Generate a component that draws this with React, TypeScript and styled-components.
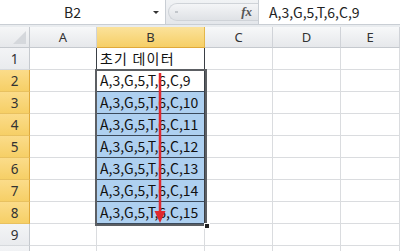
import React from "react"
import styled, { createGlobalStyle } from "styled-components"

const GlobalStyle = createGlobalStyle`
  html, body {
    margin: 0;
    padding: 0;
    width: 400px;
    height: 251px;
    overflow: hidden;
    background: #ffffff;
  }
  * {
    box-sizing: border-box;
  }
`

const Window = styled.div`
  width: 400px;
  height: 251px;
  display: flex;
  flex-direction: column;
  background: #e9ecef;
  font-family: "Noto Sans CJK KR", "Noto Sans", sans-serif;
  overflow: hidden;
`

const FormulaBar = styled.div`
  height: 25px;
  display: flex;
  align-items: stretch;
  background: linear-gradient(#f1f3f5, #e4e7eb);
  border-bottom: 1px solid #c9ced4;
`

const NameBox = styled.div`
  width: 166px;
  position: relative;
  background: #ffffff;
  border-right: 1px solid #c9ced4;
  display: flex;
  align-items: center;
  justify-content: center;
  padding-right: 20px;
  font-size: 14px;
  color: #222;
`

const DropArrow = styled.span`
  position: absolute;
  right: 6px;
  top: 11px;
  width: 0;
  height: 0;
  border-left: 3px solid transparent;
  border-right: 3px solid transparent;
  border-top: 3px solid #333;
`

const Pill = styled.div`
  width: 90px;
  margin: 3px 0 3px 2px;
  border-radius: 10px 0 0 10px;
  background: linear-gradient(#f4f5f7, #dfe2e6);
  border: 1px solid #cfd3d8;
  border-right: none;
  display: flex;
  align-items: center;
  justify-content: space-between;
  padding: 0 6px 0 6px;
`

const Grip = styled.span`
  width: 3px;
  height: 2px;
  border-top: 1px solid #c2c6cb;
  border-bottom: 1px solid #c2c6cb;
`

const Fx = styled.span`
  font-family: "Liberation Serif", serif;
  font-style: italic;
  font-weight: bold;
  font-size: 13px;
  color: #555;
`

const FormulaInput = styled.div`
  flex: 1;
  background: #ffffff;
  border-left: 1px solid #c9ced4;
  display: flex;
  align-items: center;
  padding-left: 10px;
  font-size: 14px;
  color: #222;
`

const SheetArea = styled.div`
  margin-top: 2px;
  position: relative;
  flex: 1;
  background: #ffffff;
`

const Grid = styled.div`
  display: grid;
  grid-template-columns: 30px 67px 108px 68px 68px 1fr;
  grid-template-rows: 21px repeat(10, 22px);
`

const Corner = styled.div`
  position: relative;
  background: linear-gradient(#f5f6f7, #e6e8eb);
  border-right: 1px solid #c5c9ce;
  border-bottom: 1px solid #c5c9ce;

  &::after {
    content: "";
    position: absolute;
    right: 3px;
    bottom: 3px;
    width: 0;
    height: 0;
    border-left: 13px solid transparent;
    border-bottom: 13px solid #d5d8dc;
  }
`

const ColHead = styled.div<{ $active?: boolean }>`
  display: flex;
  align-items: center;
  justify-content: center;
  font-family: "Noto Sans", sans-serif;
  font-size: 13px;
  color: #333;
  background: ${(p) =>
    p.$active
      ? "linear-gradient(#fbe29b, #f6cf66)"
      : "linear-gradient(#f7f8f9, #e6e8eb)"};
  border-right: 1px solid ${(p) => (p.$active ? "#e3b74a" : "#d0d3d8")};
  border-bottom: 1px solid ${(p) => (p.$active ? "#e0a93a" : "#c5c9ce")};
`

const RowHead = styled.div<{ $active?: boolean }>`
  display: flex;
  align-items: center;
  justify-content: center;
  font-family: "Noto Sans", sans-serif;
  font-size: 13.5px;
  color: #333;
  background: ${(p) =>
    p.$active
      ? "linear-gradient(#fbdc8a, #f6cf66)"
      : "linear-gradient(#f3f4f6, #e9ebee)"};
  border-right: 1px solid ${(p) => (p.$active ? "#e0a93a" : "#c5c9ce")};
  border-bottom: 1px solid ${(p) => (p.$active ? "#e8c160" : "#d6d9dd")};
`

const Cell = styled.div<{
  $fill?: boolean
  $boxed?: boolean
  $edge?: boolean
  $wide?: boolean
}>`
  display: flex;
  align-items: flex-end;
  padding: 0 0 1px 3px;
  font-size: 14px;
  line-height: 20px;
  letter-spacing: ${(p) => (p.$wide ? "1.2px" : "0")};
  color: #111;
  white-space: nowrap;
  overflow: hidden;
  background: ${(p) => (p.$fill ? "#aed0f0" : "#ffffff")};
  border-right: 1px solid ${(p) => (p.$boxed || p.$edge ? "#3a3f45" : "#dadcdf")};
  border-bottom: 1px solid ${(p) => (p.$boxed ? "#3a4a5c" : "#dadcdf")};
`

const Selection = styled.div`
  position: absolute;
  left: 95px;
  top: 42px;
  width: 112px;
  height: 157px;
  border: 2px solid #5c5f63;
  pointer-events: none;
`

const FillHandle = styled.div`
  position: absolute;
  right: -5px;
  bottom: -5px;
  width: 6px;
  height: 6px;
  background: #222;
  border: 1px solid #ffffff;
`

const ArrowLayer = styled.svg`
  position: absolute;
  left: 0;
  top: 0;
  pointer-events: none;
`

const columns = ["A", "B", "C", "D", "E"]

export default function App() {
  const rows = Array.from({ length: 10 }, (_, i) => i + 1)
  const value = (r: number) => {
    if (r === 1) return "초기 데이터"
    if (r >= 2 && r <= 8) return `A,3,G,5,T,6,C,${r + 7}`
    return ""
  }

  return (
    <Window>
      <GlobalStyle />
      <FormulaBar>
        <NameBox>
          B2
          <DropArrow />
        </NameBox>
        <Pill>
          <Grip />
          <Fx>fx</Fx>
        </Pill>
        <FormulaInput>A,3,G,5,T,6,C,9</FormulaInput>
      </FormulaBar>
      <SheetArea>
        <Grid>
          <Corner />
          {columns.map((c) => (
            <ColHead key={c} $active={c === "B"}>
              {c}
            </ColHead>
          ))}
          {rows.map((r) => (
            <React.Fragment key={r}>
              <RowHead $active={r >= 2 && r <= 8}>{r <= 9 ? r : ""}</RowHead>
              <Cell $edge={r <= 8} />
              <Cell $boxed={r <= 8} $fill={r >= 3 && r <= 8} $wide={r === 1}>
                {value(r)}
              </Cell>
              <Cell />
              <Cell />
              <Cell />
            </React.Fragment>
          ))}
        </Grid>
        <Selection>
          <FillHandle />
        </Selection>
        <ArrowLayer width="400" height="226" viewBox="0 0 400 226">
          <line x1="160" y1="46" x2="160" y2="186" stroke="#e0282e" strokeWidth="2.5" />
          <polygon points="154.5,184 165.5,184 160,196" fill="#e0282e" />
        </ArrowLayer>
      </SheetArea>
    </Window>
  )
}
